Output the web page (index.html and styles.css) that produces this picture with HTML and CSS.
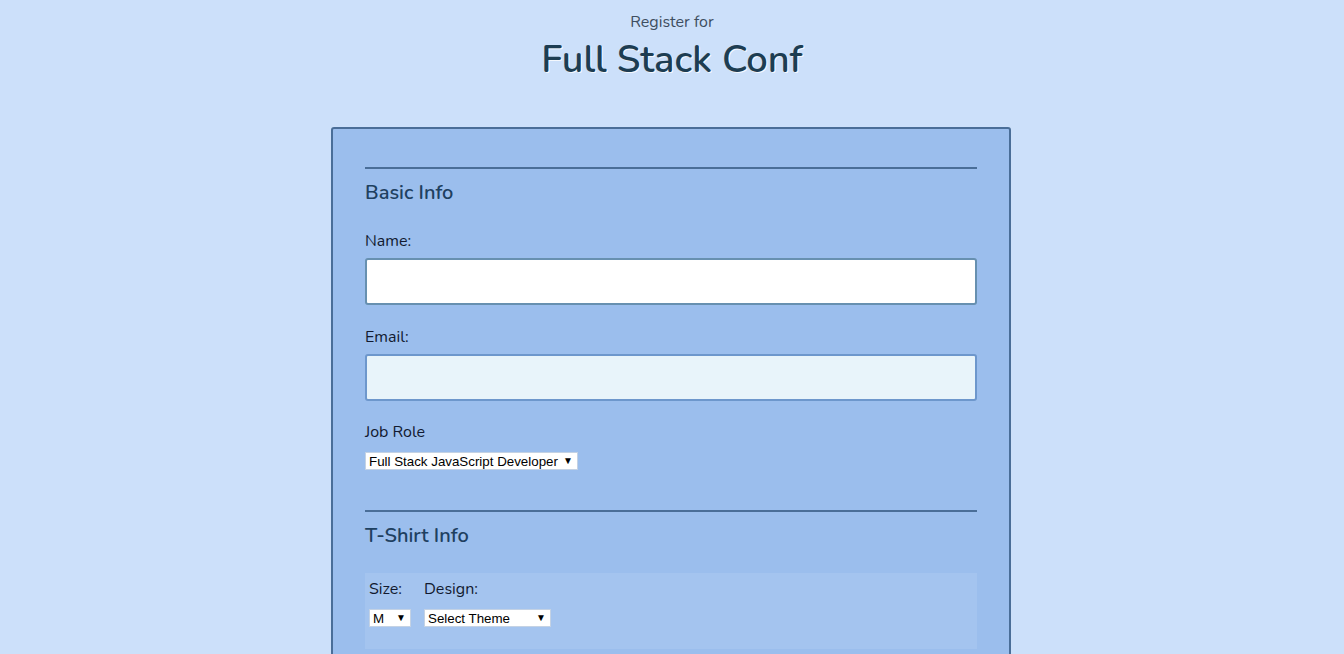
FILE: index.html
```html
<!DOCTYPE html>
<html lang="en">
<head>
  <meta charset="UTF-8">
  <title>Register for Full Stack Conf</title>
  <link rel="stylesheet" href="styles.css">
</head>
<body>
  <header class="cabecalho">
    <span class="sub">Register for</span>
    <h1>Full Stack Conf</h1>
  </header>

  <form class="container">
    <fieldset class="bloco">
      <legend>Basic Info</legend>

      <label for="name">Name:</label>
      <input type="text" id="name" class="campo">

      <label for="mail">Email:</label>
      <input type="email" id="mail" class="campo campo-mail">

      <label for="title">Job Role</label>
      <div class="sel sel-job">
        <select id="title">
          <option>Full Stack JavaScript Developer</option>
          <option>Front End Developer</option>
          <option>Back End Developer</option>
        </select>
      </div>
    </fieldset>

    <fieldset class="bloco">
      <legend>T-Shirt Info</legend>
      <div class="camisa">
        <div class="camisa-col">
          <label for="size">Size:</label>
          <div class="sel sel-size">
            <select id="size">
              <option>S</option>
              <option selected>M</option>
              <option>L</option>
            </select>
          </div>
        </div>
        <div class="camisa-col">
          <label for="design">Design:</label>
          <div class="sel sel-design">
            <select id="design">
              <option>Select Theme</option>
              <option>Theme - JS Puns</option>
            </select>
          </div>
        </div>
      </div>
    </fieldset>
  </form>
</body>
</html>
```

FILE: styles.css
```css
body {
  margin: 0;
  font-family: "Nunito", "Lato", "Open Sans", sans-serif;
  background: #cce0fa;
  color: #1a2a3e;
}

.cabecalho {
  text-align: center;
  padding-top: 12px;
  height: 127px;
  box-sizing: border-box;
}

.sub {
  display: block;
  font-size: 16px;
  color: #3e4e60;
  line-height: 20px;
}

h1 {
  margin: 5px 0 0;
  font-size: 38px;
  font-weight: 600;
  line-height: 46px;
  color: #1d3d52;
  text-shadow: 1px 1px 0 #f4f8fd;
}

.container {
  width: 680px;
  margin: 0 auto;
  position: relative;
  left: -1px;
  box-sizing: border-box;
  background: #9bbeed;
  border: 2px solid #4a6e98;
  border-radius: 3px;
  padding: 38px 32px 20px;
  min-height: 560px;
}

.bloco {
  border: none;
  border-top: 2px solid #4a6e98;
  margin: 0 0 19px;
  padding: 0;
}

legend {
  padding: 0;
  margin: 0;
  font-size: 20px;
  font-weight: 600;
  color: #1e4060;
  float: left;
  width: 100%;
  margin-top: 12px;
  margin-bottom: 26px;
  line-height: 24px;
}

label {
  display: block;
  clear: both;
  font-size: 16px;
  line-height: 20px;
  margin-bottom: 7px;
  color: #121a30;
}

.campo {
  display: block;
  width: 100%;
  height: 47px;
  box-sizing: border-box;
  border: 2px solid #6790b0;
  border-radius: 3px;
  background: #fff;
  margin-bottom: 22px;
}

.campo-mail {
  background: #e8f4fa;
  border-color: #6d97cc;
  margin-bottom: 21px;
}

.sel {
  position: relative;
  background: #fff;
  height: 18px;
}

.sel select {
  display: block;
  appearance: none;
  -webkit-appearance: none;
  border: 1px solid #c4d2e4;
  background: transparent;
  font-family: "Liberation Sans", Arial, sans-serif;
  font-size: 13.33px;
  color: #000;
  height: 18px;
  padding: 0 0 0 3px;
  width: 100%;
  box-sizing: border-box;
  border-radius: 0;
}

.sel::after {
  content: "▼";
  position: absolute;
  right: 5px;
  top: 4px;
  font-size: 10px;
  line-height: 10px;
  color: #000;
  pointer-events: none;
}

.sel-job {
  width: 213px;
  margin-top: 10px;
  margin-bottom: 21px;
}

.sel-size {
  width: 42px;
}

.sel-design {
  width: 127px;
}

.camisa {
  clear: both;
  display: flex;
  gap: 13px;
  background: #a4c4ef;
  padding: 6px 4px 20px;
  height: 50px;
  position: relative;
  top: -1px;
}

.camisa-col label {
  margin-bottom: 10px;
}
```
